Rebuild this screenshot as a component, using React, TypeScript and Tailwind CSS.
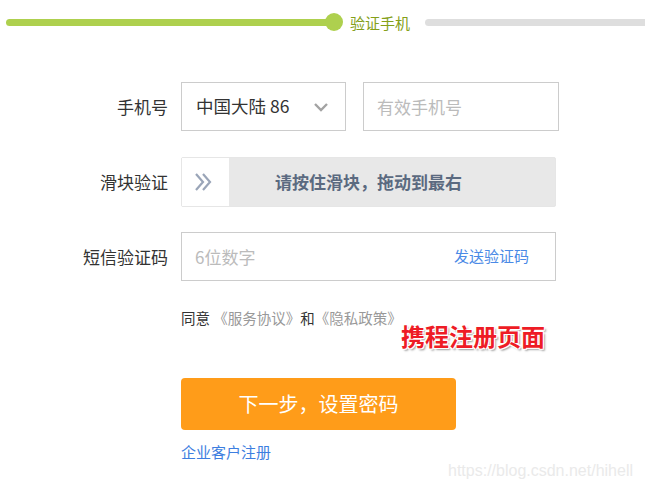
import React from "react";

function Chevron() {
  return (
    <svg width="16" height="10" viewBox="0 0 16 10" fill="none">
      <path d="M2 2l6 6 6-6" stroke="#a3a3a3" strokeWidth="2.4" />
    </svg>
  );
}

function DoubleChevron() {
  return (
    <svg width="18" height="20" viewBox="0 0 18 20" fill="none">
      <path d="M2 2l7 8-7 8M9 2l7 8-7 8" stroke="#9aa5b8" strokeWidth="2.2" />
    </svg>
  );
}

export default function App() {
  return (
    <div className="relative h-[489px] w-[645px] overflow-hidden bg-white font-['Noto_Sans_CJK_SC',sans-serif] text-[#333]">
      {/* progress */}
      <div className="flex h-[44px] items-center pl-[6px]">
        <div className="h-[7px] w-[328px] rounded-full bg-[#aed04e]" />
        <div className="-ml-[9px] h-[18px] w-[18px] rounded-full bg-[#aed04e]" />
        <span className="ml-[7px] text-[15px] leading-none text-[#84a019]">验证手机</span>
        <div className="ml-[15px] h-[7px] flex-1 rounded-l-full bg-[#dedede]" />
      </div>

      <div className="mt-[38px] flex flex-col">
        {/* phone */}
        <div className="flex items-center gap-[13px]">
          <label className="w-[168px] text-right text-[17px]">手机号</label>
          <div className="flex h-[49px] w-[165px] items-center justify-between border border-[#cccccc] pl-[14px] pr-[16px] text-[17.5px]">
            <span>中国大陆 86</span>
            <Chevron />
          </div>
          <div className="ml-[4px] flex h-[49px] w-[196px] items-center border border-[#cccccc] pl-[13px] text-[17px] text-[#bbbbbb]">
            有效手机号
          </div>
        </div>

        {/* slider */}
        <div className="mt-[26px] flex items-center gap-[13px]">
          <label className="w-[168px] text-right text-[17px]">滑块验证</label>
          <div className="relative flex h-[50px] w-[375px] items-center justify-center rounded-[2px] border border-[#e6e6e6] bg-[#e8e8e8] text-[17px] font-bold text-[#5b6a80]">
            请按住滑块，拖动到最右
            <div className="absolute inset-y-0 left-0 flex w-[47px] items-center justify-center bg-white pr-[6px]">
              <DoubleChevron />
            </div>
          </div>
        </div>

        {/* sms */}
        <div className="mt-[25px] flex items-center gap-[13px]">
          <label className="w-[168px] text-right text-[17px]">短信验证码</label>
          <div className="flex h-[49px] w-[375px] items-center justify-between border border-[#cccccc] pl-[13px] pr-[26px]">
            <span className="text-[17px] text-[#bbbbbb]">6位数字</span>
            <span className="text-[15px] text-[#4a8ae6]">发送验证码</span>
          </div>
        </div>

        <div className="mt-[26px] pl-[181px] text-[14.5px]">
          同意 <span className="text-[#999]">《服务协议》</span>和<span className="text-[#999]">《隐私政策》</span>
        </div>

        <div className="mt-[49px] pl-[181px]">
          <button className="flex h-[52px] w-[275px] items-center justify-center rounded-[4px] bg-[#ff9c19] text-[20px] text-white">
            下一步，设置密码
          </button>
          <div className="mt-[11px] text-[15px] text-[#3d7ee0]">企业客户注册</div>
        </div>
      </div>

      <div className="absolute left-[401px] top-[324px] text-[24px] font-bold leading-none text-[#ee1c25] [text-shadow:1px_1px_0_#fff,-1px_-1px_0_#fff,1px_-1px_0_#fff,-1px_1px_0_#fff,2px_2px_2px_#999]">
        携程注册页面
      </div>

      <div className="absolute left-[448px] top-[459px] font-['Liberation_Sans',sans-serif] text-[16px] text-[#eaeaea]">
        https://blog.csdn.net/hihell
      </div>
    </div>
  );
}
